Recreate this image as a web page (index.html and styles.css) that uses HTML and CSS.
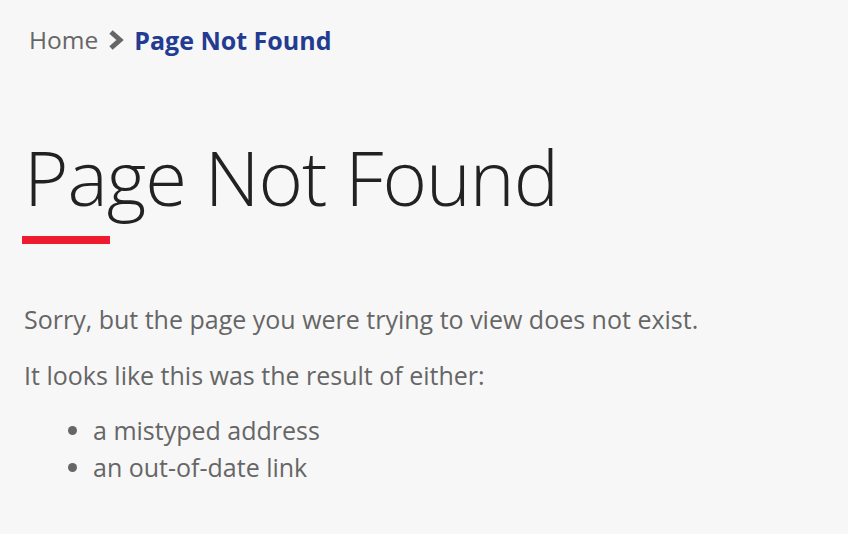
FILE: index.html
```html
<!DOCTYPE html>
<html lang="en">
<head>
<meta charset="utf-8">
<title>Page Not Found</title>
<link rel="stylesheet" href="styles.css">
</head>
<body>
<main class="page">
  <nav class="crumbs">
    <a class="crumb-home" href="#">Home</a>
    <svg class="crumb-sep" width="18" height="22" viewBox="0 0 18 22" aria-hidden="true"><path d="M4 3 L13 11 L4 19" fill="none" stroke="#666" stroke-width="5" stroke-linejoin="miter"/></svg>
    <span class="crumb-current">Page Not Found</span>
  </nav>
  <h1 class="title">Page Not Found</h1>
  <div class="rule"></div>
  <p class="text">Sorry, but the page you were trying to view does not exist.</p>
  <p class="text">It looks like this was the result of either:</p>
  <ul class="list">
    <li>a mistyped address</li>
    <li>an out-of-date link</li>
  </ul>
</main>
</body>
</html>
```
FILE: styles.css
```css
html, body {
  margin: 0;
  padding: 0;
  background: #f7f7f7;
}
body {
  font-family: "Open Sans", "Noto Sans", sans-serif;
  color: #666;
}
.page {
  padding: 22px 0 0 24px;
}
.crumbs {
  display: flex;
  align-items: center;
  gap: 9px;
  padding-left: 5px;
  font-size: 24.5px;
  line-height: 36px;
}
.crumb-home {
  color: #666;
  text-decoration: none;
}
.crumb-sep {
  display: block;
}
.crumb-current {
  color: #233b91;
  font-weight: 700;
  font-size: 25px;
}
.title {
  margin: 74px 0 0 0;
  font-size: 76px;
  font-weight: 300;
  line-height: 90px;
  color: #222;
  letter-spacing: -1px;
}
.rule {
  width: 88px;
  height: 8px;
  background: #ed1c2e;
  margin: 14px 0 0 -2px;
}
.text {
  margin: 58px 0 0 0;
  font-size: 25px;
  line-height: 34px;
}
.text + .text {
  margin-top: 22px;
}
.list {
  margin: 20px 0 0 0;
  padding-left: 69px;
  font-size: 25px;
  line-height: 37px;
}
```
